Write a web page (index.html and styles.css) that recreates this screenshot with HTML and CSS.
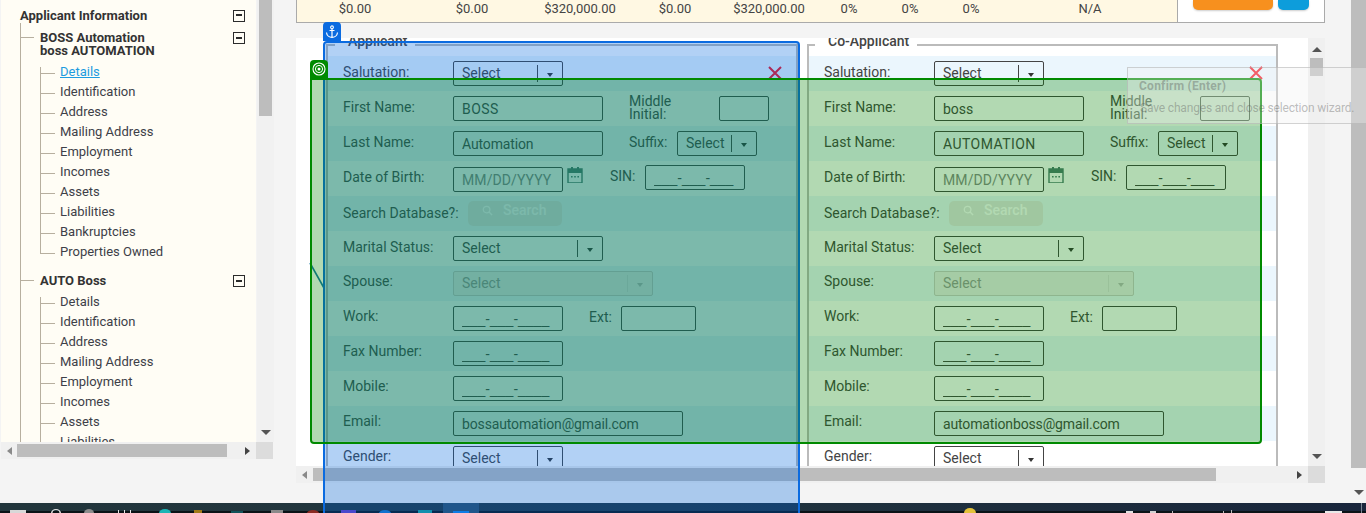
FILE: index.html
```html
<!DOCTYPE html>
<html lang="en">
<head>
<meta charset="utf-8">
<title>Applicant Information</title>
<link rel="stylesheet" href="styles.css">
</head>
<body>
<div class="page">
  <div class="app">
    <aside class="side">
      <div class="side-top">
        <nav class="tree">
          <div class="tree-root"><span>Applicant Information</span><i class="box"></i></div>
          <ul class="trunk">
            <li class="person">
              <div class="person-head"><span>BOSS Automation<br>boss AUTOMATION</span><i class="box"></i></div>
              <ul class="leaves">
                <li><a class="active" href="#">Details</a></li>
                <li>Identification</li><li>Address</li><li>Mailing Address</li><li>Employment</li><li>Incomes</li><li>Assets</li><li>Liabilities</li><li>Bankruptcies</li><li>Properties Owned</li>
              </ul>
            </li>
            <li class="person">
              <div class="person-head"><span>AUTO Boss</span><i class="box"></i></div>
              <ul class="leaves">
                <li>Details</li><li>Identification</li><li>Address</li><li>Mailing Address</li><li>Employment</li><li>Incomes</li><li>Assets</li><li>Liabilities</li><li>Bankruptcies</li>
              </ul>
            </li>
          </ul>
        </nav>
        <div class="vbar side-vbar"><b class="arr up hidden"></b><b class="thumb side-thumb"></b><b class="arr down"></b></div>
      </div>
      <div class="hbar"><b class="arr left"></b><b class="thumb side-hthumb"></b><b class="arr right"></b><b class="corner"></b></div>
    </aside>

    <main class="main">
      <div class="summary">
        <span class="c c1">$0.00</span><span class="c c2">$0.00</span><span class="c c3">$320,000.00</span><span class="c c4">$0.00</span><span class="c c5">$320,000.00</span><span class="c c6">0%</span><span class="c c7">0%</span><span class="c c8">0%</span><span class="c c9">N/A</span>
        <div class="summary-actions"><button class="btn-orange" type="button"></button><button class="btn-blue" type="button"></button></div>
      </div>

      <div class="panel">
        <div class="panel-mid">
          <div class="forms">
            <fieldset class="form">
              <legend>Applicant</legend>
              <div class="row"><label class="lbl">Salutation:</label><div class="sel w110"><span>Select</span><i></i></div><svg class="x" viewBox="0 0 14 14"><path d="M1 1L13 13M13 1L1 13" stroke="#f5101f" stroke-width="2" fill="none"/></svg></div>
              <div class="row"><label class="lbl">First Name:</label><input class="w150 caps" value="BOSS"><label class="lbl lbl2 mi">Middle Initial:</label><input class="w50"></div>
              <div class="row"><label class="lbl">Last Name:</label><input class="w150 tight" value="Automation"><label class="lbl lbl2 sfx">Suffix:</label><div class="sel w80"><span>Select</span><i></i></div></div>
              <div class="row row-dob"><label class="lbl">Date of Birth:</label><input class="w110 date" placeholder="MM/DD/YYYY"><svg class="cal" viewBox="0 0 16 16"><path d="M1 2h14v14H1z" fill="none" stroke="#4e7a70" stroke-width="1.4"/><path d="M1 2h14v4H1zM4 0h2v3H4zM10 0h2v3h-2z" fill="#4e7a70"/><path d="M4 9h1.6v1.6H4zM7.2 9h1.6v1.6H7.2zM10.4 9H12v1.6h-1.6z" fill="#4e7a70"/></svg><label class="lbl lbl2 sin">SIN:</label><input class="w100 up1 mask" value="___-___-___"></div>
              <div class="row"><label class="lbl lbl-s">Search Database?:</label><button class="search" type="button"><svg viewBox="0 0 12 12"><circle cx="5" cy="5" r="3.6" fill="none" stroke="#fff" stroke-width="1.4"/><path d="M7.7 7.7L11 11" stroke="#fff" stroke-width="1.5"/></svg><span>Search</span></button></div>
              <div class="row"><label class="lbl">Marital Status:</label><div class="sel w150"><span>Select</span><i></i></div></div>
              <div class="row"><label class="lbl">Spouse:</label><div class="sel w200 off"><span>Select</span><i></i></div></div>
              <div class="row"><label class="lbl">Work:</label><input class="w110 mask" value="___-___-____"><label class="lbl lbl2 ext">Ext:</label><input class="w75"></div>
              <div class="row"><label class="lbl">Fax Number:</label><input class="w110 mask" value="___-___-____"></div>
              <div class="row"><label class="lbl">Mobile:</label><input class="w110 mask" value="___-___-____"></div>
              <div class="row"><label class="lbl">Email:</label><input class="w230 tight" value="bossautomation@gmail.com"></div>
              <div class="row"><label class="lbl">Gender:</label><div class="sel w110"><span>Select</span><i></i></div></div>
            </fieldset>
            <fieldset class="form">
              <legend>Co-Applicant</legend>
              <div class="row"><label class="lbl">Salutation:</label><div class="sel w110"><span>Select</span><i></i></div><svg class="x" viewBox="0 0 14 14"><path d="M1 1L13 13M13 1L1 13" stroke="#f5101f" stroke-width="2" fill="none"/></svg></div>
              <div class="row"><label class="lbl">First Name:</label><input class="w150" value="boss"><label class="lbl lbl2 mi">Middle Initial:</label><input class="w50"></div>
              <div class="row"><label class="lbl">Last Name:</label><input class="w150 caps" value="AUTOMATION"><label class="lbl lbl2 sfx">Suffix:</label><div class="sel w80"><span>Select</span><i></i></div></div>
              <div class="row row-dob"><label class="lbl">Date of Birth:</label><input class="w110 date" placeholder="MM/DD/YYYY"><svg class="cal" viewBox="0 0 16 16"><path d="M1 2h14v14H1z" fill="none" stroke="#4e7a70" stroke-width="1.4"/><path d="M1 2h14v4H1zM4 0h2v3H4zM10 0h2v3h-2z" fill="#4e7a70"/><path d="M4 9h1.6v1.6H4zM7.2 9h1.6v1.6H7.2zM10.4 9H12v1.6h-1.6z" fill="#4e7a70"/></svg><label class="lbl lbl2 sin">SIN:</label><input class="w100 up1 mask" value="___-___-___"></div>
              <div class="row"><label class="lbl lbl-s">Search Database?:</label><button class="search" type="button"><svg viewBox="0 0 12 12"><circle cx="5" cy="5" r="3.6" fill="none" stroke="#fff" stroke-width="1.4"/><path d="M7.7 7.7L11 11" stroke="#fff" stroke-width="1.5"/></svg><span>Search</span></button></div>
              <div class="row"><label class="lbl">Marital Status:</label><div class="sel w150"><span>Select</span><i></i></div></div>
              <div class="row"><label class="lbl">Spouse:</label><div class="sel w200 off"><span>Select</span><i></i></div></div>
              <div class="row"><label class="lbl">Work:</label><input class="w110 mask" value="___-___-____"><label class="lbl lbl2 ext">Ext:</label><input class="w75"></div>
              <div class="row"><label class="lbl">Fax Number:</label><input class="w110 mask" value="___-___-____"></div>
              <div class="row"><label class="lbl">Mobile:</label><input class="w110 mask" value="___-___-____"></div>
              <div class="row"><label class="lbl">Email:</label><input class="w230 tight" value="automationboss@gmail.com"></div>
              <div class="row"><label class="lbl">Gender:</label><div class="sel w110"><span>Select</span><i></i></div></div>
            </fieldset>
          </div>
          <div class="vbar panel-vbar"><b class="arr up"></b><b class="thumb panel-thumb"></b><b class="arr down"></b></div>
        </div>
        <div class="hbar"><b class="arr left"></b><b class="thumb panel-hthumb"></b><b class="arr right"></b><b class="corner"></b></div>
      </div>
    </main>

    <div class="outer-bar"><b class="thumb outer-thumb"></b><b class="arr down"></b></div>
  </div>

  <svg class="taskbar" viewBox="0 0 1366 10" preserveAspectRatio="none">
    <defs><linearGradient id="tb" x1="0" x2="1" y1="0" y2="0"><stop offset="0" stop-color="#22363c"/><stop offset=".5" stop-color="#21343e"/><stop offset="1" stop-color="#19263c"/></linearGradient></defs>
    <rect width="1366" height="10" fill="url(#tb)"/>
    <rect y="8" width="1366" height="2" fill="#0a1216"/>
    <rect x="10" y="7" width="16" height="3" fill="#d8d8d8"/>
    <path d="M51 10a5 4 0 0 1 10 0h-1.500a3.500 3 0 0 0-7 0z" fill="#e6e6e6"/>
    <path d="M84 10a5 4 0 0 1 10 0z" fill="#8c8c8c"/>
    <path d="M118 7h1v3h-1zM124 7h1v3h-1zM130 7h1v3h-1z" fill="#e6e6e6"/>
    <path d="M159 10a6 4 0 0 1 12 0z" fill="#1bb5b5"/>
    <rect x="194" y="7" width="8" height="3" fill="#a07a18"/>
    <rect x="231" y="8" width="12" height="2" fill="#12525a"/>
    <rect x="271" y="7" width="12" height="3" fill="#8a8a8a"/>
    <path d="M307 10a6 3 0 0 1 12 0z" fill="#8c2a22"/>
    <rect x="443" y="0" width="36" height="10" fill="#2e4f68"/>
    <rect x="341" y="7" width="15" height="3" fill="#6a3cc4"/>
    <path d="M379 10a6 3 0 0 1 12 0z" fill="#1877c9"/>
    <rect x="418" y="7" width="14" height="3" fill="#19a39a"/>
    <rect x="453" y="8" width="16" height="2" fill="#1486ea"/>
    <path d="M964 10a6 5 0 0 1 12 0z" fill="#e3c13a"/>
    <rect x="1126" y="8" width="7" height="2" fill="#e0e0e0"/>
    <rect x="1150" y="8" width="6" height="2" fill="#d0d0d0"/>
    <rect x="1172" y="8" width="1" height="2" fill="#bbb"/>
    <rect x="1223" y="8" width="1" height="2" fill="#bbb"/>
    <rect x="1231" y="7" width="1" height="3" fill="#bbb"/>
    <rect x="1325" y="8" width="17" height="2" fill="#e8e8e8"/>
    <rect x="1361" y="0" width="1" height="10" fill="#7b8693"/>
  </svg>

  <svg class="link-line" viewBox="0 0 16 28"><path d="M1 1L15 26" stroke="#1878a8" stroke-width="1.6" fill="none"/></svg>

  <div class="ov ov-blue">
    <span class="ov-tag tag-blue"><svg viewBox="0 0 14 14"><circle cx="7" cy="2.300" r="1.400" fill="none" stroke="#fff" stroke-width="1.100"/><path d="M7 3.700V12.500M4.500 5.500H9.500M1.500 7.500C1.700 10.500 4.500 12.300 7 12.500 9.500 12.300 12.300 10.500 12.500 7.500" fill="none" stroke="#fff" stroke-width="1.200"/></svg></span>
  </div>
  <div class="ov ov-green">
    <span class="ov-tag tag-green"><svg viewBox="0 0 14 14"><circle cx="7" cy="7" r="6" fill="none" stroke="#fff" stroke-width="1.100"/><circle cx="7" cy="7" r="3.600" fill="none" stroke="#fff" stroke-width="1"/><circle cx="7" cy="7" r="1.500" fill="#fff"/></svg></span>
  </div>

  <div class="tip">
    <div class="tip-title">Confirm (Enter)</div>
    <div class="tip-body">Save changes and close selection wizard.</div>
  </div>
</div>
</body>
</html>
```

FILE: styles.css
```css
* { box-sizing: border-box; }
html, body { margin: 0; height: 513px; overflow: hidden; }
body { background: #f4f4f4; font-family: Roboto, "Liberation Sans", sans-serif; color: #444; font-size: 14px; }
.page { position: relative; width: 1366px; height: 513px; overflow: hidden; }
.app { display: flex; height: 503px; padding-left: 1px; }

/* scrollbars */
.arr { display: block; width: 0; height: 0; border-style: solid; border-color: transparent; flex: none; }
.arr.up { border-width: 0 5px 5px; border-bottom-color: #555; }
.arr.down { border-width: 5px 5px 0; border-top-color: #555; }
.arr.left { border-width: 4.500px 5px 4.500px 0; border-right-color: #8a8a8a; }
.arr.right { border-width: 4.500px 0 4.500px 5px; border-left-color: #444; }
.arr.hidden { visibility: hidden; }
.thumb { display: block; background: #bdbdbd; flex: none; }
.corner { display: block; width: 17px; height: 17px; background: #dcdcdc; flex: none; }
.vbar { width: 17px; background: #f0f0f0; display: flex; flex-direction: column; align-items: center; flex: none; }
.hbar { height: 17px; background: #f0f0f0; display: flex; align-items: center; flex: none; }

/* sidebar */
.side { width: 272px; height: 459px; display: flex; flex-direction: column; flex: none; }
.side-top { display: flex; height: 442px; }
.tree { width: 255px; height: 442px; background: #fffdf5; overflow: hidden; color: #333; font-size: 13px; flex: none; }
.tree-root { display: flex; justify-content: space-between; align-items: center; padding: 8px 11px 0 19px; height: 23px; font-weight: 700; font-size: 13px; line-height: 15px; }
.box { display: block; width: 12px; height: 12px; border: 1.300px solid #2b2b2b; position: relative; flex: none; background: #fffdf5; }
.box::after { content: ""; position: absolute; left: 2px; right: 2px; top: 3.500px; height: 2px; background: #2b2b2b; }
.trunk { list-style: none; margin: 0 0 0 19px; padding: 0; border-left: 1px solid #b7af9f; }
.person { padding: 12px 0 0 19px; position: relative; }
.person:first-child { padding-top: 8px; }
.person::before { content: ""; position: absolute; left: 0; top: 14px; width: 13px; height: 1px; background: #b7af9f; }
.person + .person::before { top: 18px; }
.person-head { display: flex; justify-content: space-between; align-items: flex-start; padding-right: 11px; font-weight: 700; line-height: 13px; margin-bottom: 5px; }
.person-head .box { margin-top: 1px; }
.leaves { list-style: none; margin: 0; padding: 0; }
.leaves li { height: 20px; line-height: 20px; padding-left: 19px; border-left: 1px solid #b7af9f; position: relative; color: #3d4048; }
.leaves li:last-child { border-left-color: transparent; }
.leaves li::before { content: ""; position: absolute; left: -1px; top: 0; width: 14px; height: 11px; border-left: 1px solid #b7af9f; border-bottom: 1px solid #b7af9f; }
.leaves li:first-child { border-left-color: transparent; }
.leaves li:first-child::before { top: 5px; height: 6px; }
.leaves li:first-child::after { content: ""; position: absolute; left: -1px; top: 11px; width: 1px; height: 9px; background: #b7af9f; }
.leaves a { color: #1e9ce0; }
.side-vbar { width: 17px; padding-top: 0; margin-left: 1px; background: #f1f1f1; }
.side-thumb { width: 13px; height: 116px; margin-top: 0; }
.side-vbar .up { height: 0; border-width: 0; }
.side-vbar .down { margin-top: 314px; }
.side .hbar { padding-left: 6px; width: 272px; }
.side-hthumb { width: 210px; height: 13px; margin-left: 5px; }
.side .right { margin-left: 18px; }
.side .corner { margin-left: auto; }

/* main */
.main { width: 1029px; margin-left: 23px; display: flex; flex-direction: column; flex: none; }
.summary { height: 23px; display: grid; grid-template-columns: 116px 118px 98px 92px 96px 64px 58px 64px 174px 1fr; align-items: start; background: #fff8e3; border-left: 1px solid #aaa; border-right: 1px solid #aaa; border-bottom: 1px solid #aaa; font-size: 13px; line-height: 17px; color: #444; }
.c { text-align: center; display: block; }
.summary-actions { background: #fff; border-left: 1px solid #aaa; height: 22px; display: flex; align-items: flex-start; padding-left: 15px; gap: 5px; }
.btn-orange, .btn-blue { border: 0; padding: 0; height: 9.500px; border-radius: 0 0 5px 5px; box-shadow: 0 1px 2px rgba(0,0,0,.2); }
.btn-orange { width: 80px; background: #f7901e; }
.btn-blue { width: 31px; background: #0d9ddb; }

.panel { margin-top: 15px; display: flex; flex-direction: column; height: 445px; }
.panel-mid { display: flex; height: 428px; background: #fff; }
.forms { flex: 1; display: flex; gap: 9px; padding-left: 30px; overflow: hidden; height: 428px; }
.panel-vbar { justify-content: flex-start; padding-top: 9px; }
.panel-vbar .thumb { width: 13px; height: 18px; margin-top: 6px; }
.panel-vbar .down { margin-top: auto; margin-bottom: 7px; }
.panel .hbar { padding-left: 6px; }
.panel-hthumb { width: 903px; height: 13px; margin-left: 6px; }
.panel .right { margin-left: 81px; }
.panel .corner { margin-left: 6px; }

/* fieldset */
.form { width: 472px; flex: none; margin: -5px 0 0; padding: 0; border: 2px solid #bbb; min-inline-size: 0; height: 500px; }
.form legend { margin-left: 7px; padding: 0 8px 8px 13px; font-size: 14px; font-weight: 500; line-height: 16px; color: #444; }
.form + .form { width: 471px; }
.form + .form legend { margin-left: 6px; }
.row { display: flex; align-items: flex-start; height: 35px; padding: 5px 0 0 15px; position: relative; }
.form legend + .row { margin-top: -1px; }
.row:nth-of-type(odd) { background: #ebf6fd; }
.lbl { width: 110px; line-height: 20px; margin-top: 1px; flex: none; white-space: nowrap; }
.row:nth-of-type(n+7) .lbl { margin-top: 0; }
.lbl-s { width: 125px; margin-top: 2px; }
.lbl2 { width: auto; }
.mi { width: 90px; margin-left: 26px; line-height: 13px; white-space: normal; padding-right: 40px; margin-top: -1px; }
.sfx { width: 48px; margin-left: 26px; }
.sin { width: 35px; margin-left: 27px; }
.row:nth-of-type(n+7) .ext { width: 32px; margin-left: 26px; margin-top: 1px; }
input { height: 25px; border: 1px solid #444; border-radius: 2px; padding: 0 8px; font: 14px Roboto, sans-serif; color: #444; background: #fff0; flex: none; outline: 0; }
input::placeholder { color: #888; opacity: 1; }
.w50 { width: 50px; } .w75 { width: 75px; } .w80 { width: 80px; } .w100 { width: 100px; } .w110 { width: 110px; } .w150 { width: 150px; } .w200 { width: 200px; } .w230 { width: 230px; }
.caps { letter-spacing: .45px; }
.tight { letter-spacing: -.14px; }
.mask { font-family: "Liberation Sans", sans-serif; }
.up1 { margin-top: -1px; }
.row-dob .date { margin-top: 1px; letter-spacing: .1px; }
.sel { height: 25px; border: 1px solid #444; border-radius: 2px; display: flex; align-items: center; padding-left: 8px; flex: none; line-height: 23px; color: #444; }
.sel span { flex: 1; padding-top: 1px; border-right: 1px solid #444; height: 17px; line-height: 15px; }
.sel i { width: 24px; flex: none; height: 0; position: relative; }
.sel i::after { content: ""; position: absolute; left: 9px; top: -1px; border: solid transparent; border-width: 4px 3px 0; border-top-color: #333; }
.off { background: #ececec; border-color: #ccc; }
.off span { color: #999; border-right-color: #ddd; }
.off i::after { border-top-color: #bbb; }
.cal { width: 16px; height: 16px; margin: 1px 0 0 4px; flex: none; }
.row-dob .sin { margin-top: 0; }
.x { position: absolute; right: 14px; top: 10px; width: 14px; height: 14px; }
.form + .form .x { right: 13px; }
.search { width: 94px; height: 25px; border: 0; border-radius: 5px; background: #e6e6e6; color: #fff; font: 500 14px Roboto, sans-serif; display: flex; align-items: center; padding: 0 0 7px 14px; gap: 10px; }
.search svg { width: 11px; height: 11px; }

.outer-bar { width: 15px; margin-left: 26px; display: flex; flex-direction: column; align-items: center; flex: none; }
.outer-thumb { width: 15px; height: 468px; }
.outer-bar .down { margin-top: 22px; }

/* taskbar */
.taskbar { display: block; width: 1366px; height: 10px; }

/* overlays */
.ov { position: absolute; border: 2px solid; border-radius: 4px; }
.ov-blue { left: 323px; top: 41px; width: 477px; height: 480px; border-color: #0b6be0; background: rgba(0,102,222,.3); }
.ov-green { left: 310px; top: 78px; width: 952px; height: 366px; border-color: #008a00; background: rgba(0,128,0,.3); border-top-left-radius: 0; }
.ov-tag { position: absolute; display: flex; align-items: center; justify-content: center; border-radius: 4px 4px 0 0; }
.ov-tag svg { width: 14px; height: 14px; }
.tag-blue { left: -2px; top: -21px; width: 18px; height: 19px; background: #0b6be0; }
.tag-green { left: -2px; top: -20px; width: 18px; height: 18px; background: #008a00; }
.link-line { position: absolute; left: 309px; top: 262px; width: 16px; height: 28px; }
.tip { position: absolute; left: 1127px; top: 67px; width: 245px; height: 57px; background: rgba(240,240,240,.35); border: 1px solid rgba(170,170,170,.5); padding: 10px 0 0 11px; font-size: 12px; color: rgba(90,90,90,.4); }
.tip-title { font-weight: 700; line-height: 16px; letter-spacing: .25px; }
.tip-body { line-height: 16px; margin-top: 6px; margin-left: 1px; letter-spacing: -.17px; }
```
